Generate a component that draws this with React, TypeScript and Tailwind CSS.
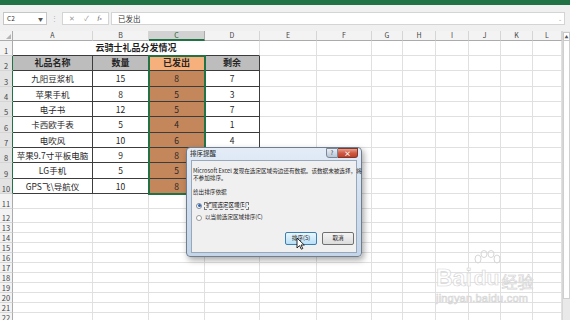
import React from "react";

const cols = [
  { k: "A", w: "w-[80px]" },
  { k: "B", w: "w-[56px]" },
  { k: "C", w: "w-[56px]" },
  { k: "D", w: "w-[55px]" },
  { k: "E", w: "w-[57px]" },
  { k: "F", w: "w-[55px]" },
  { k: "G", w: "w-[31px]" },
  { k: "H", w: "w-[33px]" },
  { k: "I", w: "w-[33px]" },
  { k: "J", w: "w-[32px]" },
  { k: "K", w: "w-[32px]" },
  { k: "L", w: "w-[29px]" },
];

const rowHeights: Record<number, string> = {
  1: "h-[15px]",
  2: "h-[15px]",
  3: "h-[16px]",
  4: "h-[15px]",
  5: "h-[15px]",
  6: "h-[16px]",
  7: "h-[15px]",
  8: "h-[15px]",
  9: "h-[16px]",
  10: "h-[15px]",
  11: "h-[15px]",
  12: "h-[14px]",
};

const header = ["礼品名称", "数量", "已发出", "剩余"];

const data = [
  ["九阳豆浆机", "15", "8", "7"],
  ["苹果手机", "8", "5", "3"],
  ["电子书", "12", "5", "7"],
  ["卡西欧手表", "5", "4", "1"],
  ["电吹风", "10", "6", "4"],
  ["苹果9.7寸平板电脑", "9", "8", "1"],
  ["LG手机", "5", "5", "0"],
  ["GPS飞\\导航仪", "10", "8", "2"],
];

const rows = Array.from({ length: 22 }, (_, i) => i + 1);

function Cell({ r, c }: { r: number; c: number }) {
  const w = cols[c].w;
  if (r >= 2 && r <= 10 && c < 4) {
    const isHead = r === 2;
    const text = isHead ? header[c] : data[r - 3][c];
    let bg = "bg-white";
    if (isHead) bg = c === 2 ? "bg-[#f6b07c]" : "bg-[#bdbdbd]";
    else if (c === 2) bg = "bg-[#c4875c]";
    return (
      <div
        className={`${w} ${bg} shrink-0 h-full border-r border-b border-[#3c3c3c] flex items-center justify-center text-[8.5px] text-[#262626] whitespace-nowrap ${
          isHead ? "font-bold text-[9px]" : ""
        }`}
      >
        {text}
      </div>
    );
  }
  return <div className={`${w} shrink-0 h-full border-r border-b border-[#e0e0e0]`} />;
}

function Sheet() {
  return (
    <div className="relative flex-1">
      {/* column headers */}
      <div className="flex h-[10px]">
        <div className="w-[13px] shrink-0 h-full bg-[#f3f3f3] border-r border-b border-[#ababab] relative">
          <div className="absolute right-[1px] bottom-[1px] w-0 h-0 border-l-[5px] border-l-transparent border-b-[5px] border-b-[#b5b5b5]" />
        </div>
        {cols.map((col) => (
          <div
            key={col.k}
            className={`${col.w} shrink-0 h-full flex items-center justify-center text-[7px] leading-none ${
              col.k === "C"
                ? "bg-[#d2d2d2] border-r border-[#ababab] border-b-2 border-b-[#217346] text-[#1c5c38]"
                : "bg-[#f3f3f3] border-r border-b border-r-[#d5d5d5] border-b-[#ababab] text-[#444]"
            }`}
          >
            {col.k}
          </div>
        ))}
      </div>

      {rows.map((r) => {
        const selected = r >= 2 && r <= 10;
        return (
          <div key={r} className={`flex ${rowHeights[r] ?? "h-[10px]"}`}>
            <div
              className={`w-[13px] shrink-0 h-full flex items-end justify-center pb-[1px] text-[7.5px] leading-none text-[#444] border-b border-[#d5d5d5] ${
                selected ? "bg-[#e3e3e3] border-r border-r-[#217346]" : "bg-[#f3f3f3] border-r border-r-[#ababab]"
              }`}
            >
              {r}
            </div>
            {r === 1 ? (
              <>
                <div className="w-[247px] shrink-0 h-full border-r border-r-[#e0e0e0] border-b border-b-[#3c3c3c] flex items-center justify-center text-[9px] font-bold text-[#1f1f1f]">
                  云骑士礼品分发情况
                </div>
                {cols.slice(4).map((_, i) => (
                  <Cell key={i} r={r} c={i + 4} />
                ))}
              </>
            ) : (
              cols.map((_, c) => <Cell key={c} r={r} c={c} />)
            )}
          </div>
        );
      })}

      {/* selection outline C2:C10 */}
      <div className="absolute left-[148px] top-[24px] w-[58px] h-[140px] border-2 border-[#217346] pointer-events-none" />
    </div>
  );
}

function Dialog() {
  return (
    <div className="absolute left-[186px] top-[147px] w-[176px] h-[110px] rounded-[4px] border border-[#6f7d8c] bg-linear-to-b from-[#e3ecf7] via-[#d0deef] to-[#c4d5e9] shadow-[2px_3px_6px_rgba(0,0,0,0.35)] flex flex-col">
      <div className="h-[12px] flex items-start justify-between pl-[3px]">
        <span className="text-[6.5px] leading-[11px] text-[#1e1e1e]">排序提醒</span>
        <div className="flex mr-[3px]">
          <div className="w-[12px] h-[10px] rounded-bl-[3px] border border-[#7b8797] bg-linear-to-b from-[#e9eef4] to-[#b8c6d6] flex items-center justify-center text-[6px] leading-none text-[#333]">
            ?
          </div>
          <div className="w-[20px] h-[10px] rounded-br-[3px] border border-l-0 border-[#7a3a30] bg-linear-to-b from-[#e6a08e] via-[#cf5a43] to-[#c23f2a] flex items-center justify-center text-[7px] leading-none text-white font-bold">
            ×
          </div>
        </div>
      </div>
      <div className="mx-[4px] mb-[3px] flex-1 bg-[#f0f0f0] border border-[#97a8bb] px-[1px] pt-[7px] text-[5.6px] leading-[7px] text-[#1f1f1f] flex flex-col">
        <div className="whitespace-nowrap">Microsoft Excel 发现在选定区域旁边还有数据。该数据未被选择，将</div>
        <div className="whitespace-nowrap">不参加排序。</div>
        <div className="whitespace-nowrap mt-[7px]">给出排序依据</div>
        <div className="flex items-center mt-[5px] ml-[3px] h-[9px]">
          <div className="w-[6px] h-[6px] shrink-0 rounded-full border border-[#7f8b99] bg-white flex items-center justify-center">
            <div className="w-[3px] h-[3px] rounded-full bg-[#2a62b0]" />
          </div>
          <div className="ml-[2px] h-[8px] px-[1px] border border-dashed border-[#777] flex items-center whitespace-nowrap">
            扩展选定区域(E)
          </div>
        </div>
        <div className="flex items-center mt-[3px] ml-[3px] h-[9px]">
          <div className="w-[6px] h-[6px] shrink-0 rounded-full border border-[#9a9a9a] bg-white" />
          <span className="ml-[3px] whitespace-nowrap">以当前选定区域排序(C)</span>
        </div>
        <div className="flex justify-end gap-[5px] mt-[10px] mr-[1px]">
          <div className="w-[32px] h-[13px] rounded-[2px] border border-[#3c7fb1] bg-linear-to-b from-[#eaf6fd] to-[#b9e0f8] flex items-center justify-center whitespace-nowrap">
            排序(S)
          </div>
          <div className="w-[32px] h-[13px] rounded-[2px] border border-[#707070] bg-linear-to-b from-[#f4f4f4] to-[#dcdcdc] flex items-center justify-center">
            取消
          </div>
        </div>
      </div>
    </div>
  );
}

export default function App() {
  return (
    <div className="w-[570px] h-[320px] overflow-hidden bg-white relative font-['Noto_Sans_CJK_SC',sans-serif] flex flex-col">
      <div className="h-[5px] bg-[#217346] shrink-0" />

      {/* formula bar */}
      <div className="h-[26px] shrink-0 bg-[#f0f0f0] flex items-start pt-[7px] pl-[3px] pr-[5px]">
        <div className="w-[44px] h-[13px] bg-white border border-[#c6c6c6] flex items-center justify-between px-[3px] text-[6.5px] text-[#333]">
          <span>C2</span>
          <span className="text-[5px] text-[#555]">▼</span>
        </div>
        <div className="w-[15px] h-[13px] flex items-center justify-center text-[7px] text-[#b0b0b0]">⋮</div>
        <div className="w-[47px] h-[13px] bg-white border border-[#d4d4d4] flex items-center justify-around px-[2px] text-[7px] text-[#9a9a9a]">
          <span>✕</span>
          <span>✓</span>
          <span className="italic text-[#555] font-['Liberation_Serif',serif]">f<span className="text-[5px]">x</span></span>
        </div>
        <div className="flex-1 ml-[2px] h-[13px] bg-white border border-[#d4d4d4] flex items-center justify-between pl-[6px] pr-[2px] text-[7.5px] text-[#333]">
          <span>已发出</span>
          <span className="text-[5px] text-[#999]">⌄</span>
        </div>
      </div>

      <div className="flex flex-1">
        <Sheet />
        {/* vertical scrollbar */}
        <div className="w-[8px] shrink-0 bg-[#e9e9e9] border-l border-[#d6d6d6] flex flex-col">
          <div className="h-[9px] mt-[1px] bg-white border border-[#c8c8c8] flex items-center justify-center text-[4px] text-[#555]">▲</div>
          <div className="h-[258px] bg-white border-x border-b border-[#cfcfcf]" />
        </div>
      </div>

      <Dialog />

      {/* mouse cursor */}
      <svg className="absolute left-[296px] top-[237px]" width="9" height="13" viewBox="0 0 9 13">
        <path d="M1 1 L1 11 L3.5 8.6 L5.3 12.2 L6.8 11.5 L5 8 L8.3 8 Z" fill="#fff" stroke="#111" strokeWidth="0.9" strokeLinejoin="round" />
      </svg>

      {/* watermark */}
      <div className="absolute left-[436px] top-[258px] text-white/70 [-webkit-text-stroke:0.7px_#d6d6d6] pointer-events-none">
        <div className="flex items-end h-[32px]">
          <span className="font-['Liberation_Sans',sans-serif] font-bold text-[23px] leading-none">Bai</span>
          <div className="relative ml-[2px]">
            <svg className="absolute left-[-2px] top-[-16px]" width="30" height="20" viewBox="0 0 30 20">
              <g fill="none" stroke="#d6d6d6" strokeWidth="1">
                <ellipse cx="6" cy="9" rx="3" ry="4" />
                <ellipse cx="12" cy="4" rx="3" ry="3.5" />
                <ellipse cx="19" cy="4" rx="3" ry="3.5" />
                <ellipse cx="25" cy="9" rx="3" ry="4" />
              </g>
            </svg>
            <span className="font-['Liberation_Sans',sans-serif] font-bold text-[21px] leading-none">du</span>
          </div>
          <span className="text-[16px] leading-none ml-[2px] mb-[1px]">经验</span>
        </div>
        <div className="font-['Liberation_Sans',sans-serif] text-[11px] leading-[12px] mt-[2px] tracking-[0.2px]">jingyan.baidu.com</div>
      </div>
    </div>
  );
}
